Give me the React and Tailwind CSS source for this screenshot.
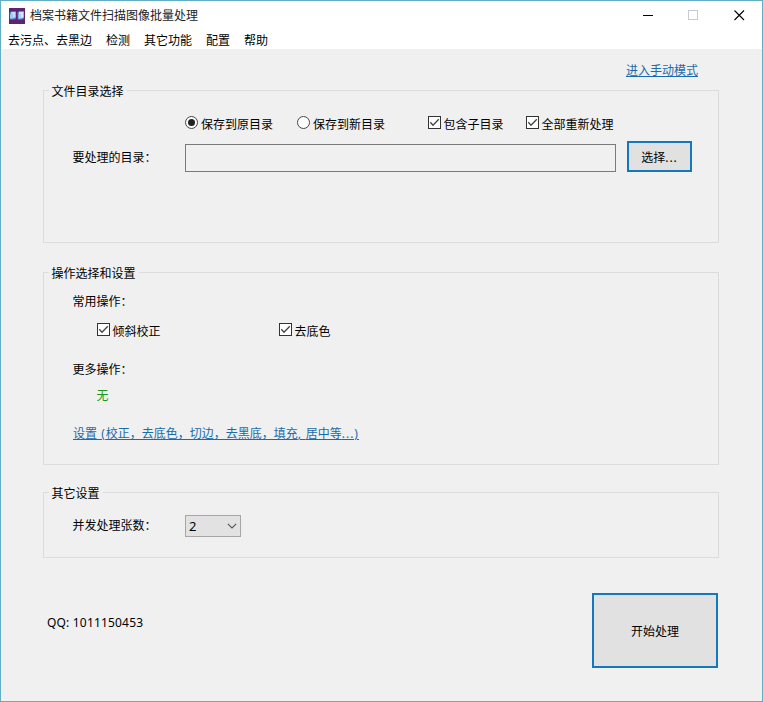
import { useState } from "react";

const MENU = ["去污点、去黑边", "检测", "其它功能", "配置", "帮助"];

function AppIcon() {
  return (
    <svg width="16" height="16" viewBox="0 0 16 16">
      <rect width="16" height="16" fill="#5c2472" />
      <path d="M0.5 4.5 L3 3.2 H7 V10.5 L5.5 11.5 H1 Z" fill="#5d86cc" />
      <path d="M2.2 4 H6.5 V9.5 L2 10.2 Z" fill="#c3defa" />
      <path d="M1 6.5 L4 5.5 V10.5 H1 Z" fill="#a4c8f2" />
      <path d="M8.5 4.5 L10.5 3 H15 V10 L13.5 11.5 H8.8 Z" fill="#6690d6" />
      <path d="M10 4 H14.5 V9.5 L10 10.5 Z" fill="#d2e8ff" />
      <path d="M9.5 6.5 L12 5.5 V10.5 H9.5 Z" fill="#b0d0f6" />
    </svg>
  );
}

function TitleBar() {
  return (
    <div className="h-[29px] bg-white flex items-center pl-2 pr-[17px]">
      <AppIcon />
      <span className="ml-[5px] mt-px text-[#222]">档案书籍文件扫描图像批量处理</span>
      <div className="ml-auto flex items-center gap-[34px]">
        <svg width="11" height="11" viewBox="0 0 11 11" shapeRendering="crispEdges">
          <path d="M0 5.5 H10" stroke="#000" />
        </svg>
        <svg width="11" height="11" viewBox="0 0 11 11" shapeRendering="crispEdges">
          <rect x="0.5" y="0.5" width="9" height="9" fill="none" stroke="#c9c9d3" />
        </svg>
        <svg width="11" height="11" viewBox="0 0 11 11" className="ml-px">
          <path d="M0.5 0.5 L10 10 M10 0.5 L0.5 10" stroke="#000" strokeWidth="1.1" />
        </svg>
      </div>
    </div>
  );
}

function Radio({ label, checked, onChange, className }) {
  return (
    <label className={`flex items-start ${className}`}>
      <input type="radio" name="target" className="sr-only" checked={checked} onChange={onChange} />
      <svg width="13" height="13" viewBox="0 0 13 13" className="mt-px">
        <circle cx="6.5" cy="6.5" r="6" fill="#fff" stroke="#444" />
        {checked && <circle cx="6.5" cy="6.5" r="3.5" fill="#222" />}
      </svg>
      <span className="ml-[3px] mt-px">{label}</span>
    </label>
  );
}

function Checkbox({ label, className }) {
  const [checked, setChecked] = useState(true);
  return (
    <label className={`flex items-start ${className}`}>
      <input
        type="checkbox"
        className="sr-only"
        checked={checked}
        onChange={(e) => setChecked(e.target.checked)}
      />
      <svg width="13" height="13" viewBox="0 0 13 13" className="mt-px">
        <rect x="0.5" y="0.5" width="12" height="12" fill="#fff" stroke="#333" />
        {checked && <path d="M2.3 6.3 L5 9.2 L10.8 3.2" fill="none" stroke="#444" strokeWidth="1.3" />}
      </svg>
      <span className="ml-[2.5px] mt-px">{label}</span>
    </label>
  );
}

function Group({ title, className, children }) {
  return (
    <fieldset className={`border border-[#dcdcdc] ${className}`}>
      <legend className="ml-[5px] pl-[2.5px] pr-[3px] pt-0.5 leading-[15px]">{title}</legend>
      {children}
    </fieldset>
  );
}

export default function App() {
  const [target, setTarget] = useState("old");

  return (
    <div className="w-[763px] h-[702px] border border-[#62aec4] bg-[#f0f0f0] text-black text-[12px] leading-[18px] font-['Noto_Sans','Noto_Sans_CJK_SC',sans-serif] whitespace-nowrap overflow-hidden flex flex-col">
      <TitleBar />
      <div className="h-[19px] bg-white flex items-start gap-3.5 pl-[7px] pt-0.5">
        {MENU.map((m) => (
          <span key={m}>{m}</span>
        ))}
      </div>

      <div className="h-[33px] pt-[13px] pr-16 text-right">
        <a className="text-[#1a6ba8] underline">进入手动模式</a>
      </div>

      <div className="ml-[42px] w-[676px] flex flex-col">
        <Group title="文件目录选择" className="h-[161px]">
          <div className="flex mt-4 ml-[141px] h-[18px]">
            <Radio
              label="保存到原目录"
              checked={target === "old"}
              onChange={() => setTarget("old")}
              className="w-[112px]"
            />
            <Radio
              label="保存到新目录"
              checked={target === "new"}
              onChange={() => setTarget("new")}
              className="w-[131px]"
            />
            <Checkbox label="包含子目录" className="w-[98px]" />
            <Checkbox label="全部重新处理" />
          </div>
          <div className="flex items-center mt-2 ml-7">
            <span className="w-[113px] pl-[0.5px] mt-0.5">要处理的目录：</span>
            <input
              readOnly
              className="w-[431px] h-7 mt-[3px] border border-[#7a7a7a] bg-[#f0f0f0] outline-none"
            />
            <button className="ml-[11px] w-[65px] h-[31px] pt-0.5 border-2 border-[#1478be] bg-[#e1e1e1]">
              选择<span className="tracking-[1px]">...</span>
            </button>
          </div>
        </Group>

        <Group title="操作选择和设置" className="h-[201px] mt-[21px]">
          <div className="ml-7 pt-3">
            <p className="pl-[0.5px]">常用操作：</p>
            <div className="flex ml-[25px] mt-[11px] h-[18px]">
              <Checkbox label="倾斜校正" className="w-[182px]" />
              <Checkbox label="去底色" />
            </div>
            <p className="mt-[21px] pl-[0.5px]">更多操作：</p>
            <p className="ml-[24.5px] mt-2 text-[#1a9a1a]">无</p>
            <p className="mt-5 ml-px">
              <a className="text-[#1a6ba8] underline">
                设置<span className="tracking-[1px]"> (</span>
                校正，去底色，切边，去黑底，填充
                <span className="tracking-[0.8px]">, </span>
                居中等
                <span className="tracking-[1px]">...)</span>
              </a>
            </p>
          </div>
        </Group>

        <Group title="其它设置" className="h-[74px] mt-[19px]">
          <div className="flex items-center mt-3.5 ml-7">
            <span className="w-[113px] pl-[0.5px]">并发处理张数：</span>
            <div className="w-14 h-[22px] border border-[#a6a6a6] bg-[#e2e2e2] flex items-center justify-between pl-[3px] pr-[3px]">
              <span className="text-[13px]">2</span>
              <svg width="10" height="6" viewBox="0 0 10 6">
                <path d="M0.8 0.8 L5 5 L9.2 0.8" fill="none" stroke="#555" strokeWidth="1.1" />
              </svg>
            </div>
          </div>
        </Group>

        <div className="flex justify-between mt-[35px] pl-1 pr-px">
          <span className="mt-[21px] tracking-[0.18px]">QQ: 1011150453</span>
          <button className="w-[126px] h-[75px] pt-0.5 border-2 border-[#1478be] bg-[#e1e1e1]">
            开始处理
          </button>
        </div>
      </div>
    </div>
  );
}
